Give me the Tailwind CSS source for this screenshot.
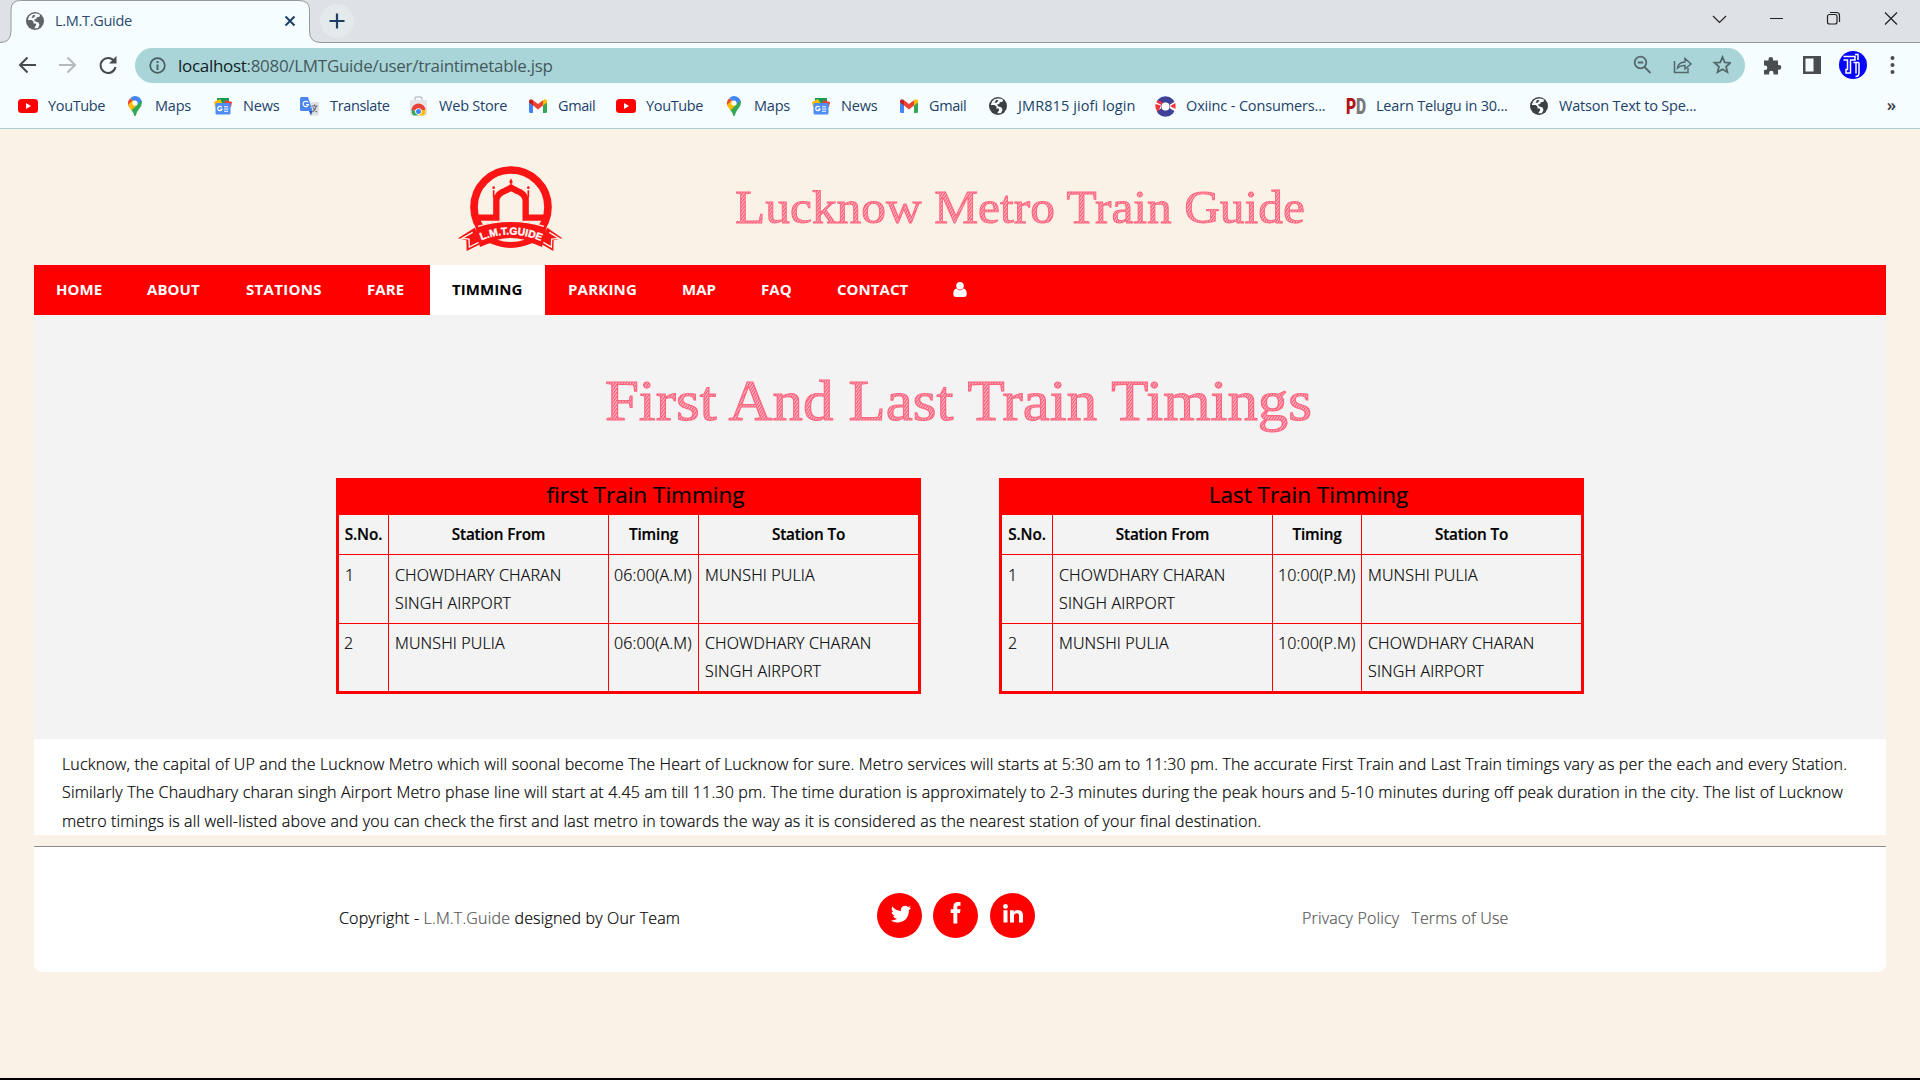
<!DOCTYPE html>
<html lang="en">
<head>
<meta charset="utf-8">
<title>L.M.T.Guide</title>
<script src="https://cdn.jsdelivr.net/npm/@tailwindcss/browser@4"></script>
</head>
<body class="w-[1920px] h-[1080px] overflow-hidden bg-[#fbf2e7] font-['Open_Sans',sans-serif] text-black flex flex-col">

<svg class="absolute w-0 h-0">
  <defs>
    <pattern id="hatch" width="2.3" height="2.3" patternUnits="userSpaceOnUse" patternTransform="rotate(35)"><rect width="2.3" height="2.3" fill="#ff6680" fill-opacity=".35"/><rect width="1.2" height="2.3" fill="#ff5474"/></pattern>
    <symbol id="yt" viewBox="0 0 20 20"><rect y="3" width="20" height="14" rx="3.5" fill="#f00"/><path d="M8 7l5 3-5 3z" fill="#fff"/></symbol>
    <symbol id="maps" viewBox="0 0 14 20"><path d="M7 0a7 7 0 0 1 6.9 6L7 10 2.5 2Q4.500 0 7 0z" fill="#4285f4"/><path d="M2.200 2.200L7 7 1.300 11Q-1.800 6 2.200 2.200z" fill="#ea4335"/><path d="M.3 8.500L5 4l4 5-5 6Q1 12 .3 8.500z" fill="#fbbc04"/><path d="M13.600 4.500Q15 9 11 13 8.500 16 7.800 19.500q-.8 1-1.600 0Q5.800 17 3.500 14.300z" fill="#34a853"/><circle cx="7" cy="7" r="2.600" fill="#fff"/></symbol>
    <symbol id="news" viewBox="0 0 18 18"><path d="M3 1h12v6H3z" fill="#0f9d58"/><path d="M0 5l6-3 3 5-8 3z" fill="#fbbc04"/><path d="M11 3l7 2-1 5-7-2z" fill="#ea4335"/><rect x="1.500" y="6" width="15" height="11.500" rx="1.500" fill="#4f8df5"/><path d="M7.700 10.200a2.200 2.200 0 1 0 .3 2H6.200" stroke="#fff" stroke-width="1.200" fill="none"/><path d="M10 9.800h4M10 12h4.500M10 14.200h4" stroke="#fff" stroke-width="1.100"/></symbol>
    <symbol id="gmail" viewBox="0 0 18 14"><path d="M0 2v10.500q0 1.500 1.300 1.500H4V5z" fill="#4285f4"/><path d="M18 2v10.500q0 1.500-1.300 1.500H14V5z" fill="#34a853"/><path d="M4 1.200l5 3.900 5-3.900v5.300l-5 4-5-4z" fill="#ea4335"/><path d="M0 2Q.8-.8 4 1.200v5.300L0 3.500z" fill="#c5221f"/><path d="M18 2q-.8-2.800-4-.8v5.300l4-3z" fill="#fbbc04"/></symbol>
    <symbol id="globe" viewBox="0 0 18 18"><circle cx="9" cy="9" r="9" fill="currentColor"/><path d="M9.500 1.500Q5.500 1 3 4.500L1.800 8h3.700l2 1.500v2h2.200l.5 1.500-2 3.300Q11 16.500 12 16l1.500-3-1-2.500-3.500-1.200-1-1.800 2.200-.6.6-1.600 2.700-.6.5-2Q12 1.500 9.500 1.500z" fill="#f5fdff"/><path d="M7 3l2.500.3L8 5.500 5.500 6z" fill="currentColor"/></symbol>
  </defs>
</svg>

<!-- Tab strip -->
<div class="h-[43px] shrink-0 bg-[#dee1e6] border-b border-[#96999e] flex items-start relative">
  <svg class="absolute left-0 top-0" width="325" height="43" viewBox="0 0 325 43"><path d="M0 42.500Q11 42.500 11 31V10Q11 .5 20.500 .5H299Q309.500 .5 309.500 10V31Q309.500 42.500 321 42.500V44H0z" fill="#f5fdff"/><path d="M0 42.500Q11 42.500 11 31V10Q11 .5 20.500 .5H299Q309.500 .5 309.500 10V31Q309.500 42.500 321 42.500" fill="none" stroke="#96999e"/></svg>
  <div class="relative flex items-center h-[41px] w-[310px] pl-[26px]">
    <svg class="w-[18px] h-[18px] text-[#5f6368]"><use href="#globe"/></svg>
    <span class="ml-[11px] text-[14.5px] tracking-[-0.3px] text-[#2c4a6b] whitespace-nowrap">L.M.T.Guide</span>
    <svg class="absolute left-[284px] top-[15px]" width="12" height="12" viewBox="0 0 12 12"><path d="M1.500 1.500l9 9M10.500 1.500l-9 9" stroke="#1f3f66" stroke-width="2"/></svg>
  </div>
  <div class="relative ml-[10px] mt-[4px] w-[34px] h-[34px] rounded-full bg-[#e4e9ec] flex items-center justify-center">
    <svg width="16" height="16" viewBox="0 0 16 16"><path d="M8 .5v15M.5 8h15" stroke="#1f3f66" stroke-width="2.200"/></svg>
  </div>
  <svg class="ml-auto mr-[15px] mt-[10px]" width="200" height="18" viewBox="0 0 200 18" fill="none" stroke="#222" stroke-width="1.200"><path d="M8 6l6.500 6.500L21 6M65 8.500h13M180 2.500l12 12M192 2.500l-12 12"/><rect x="122.500" y="4.500" width="9.500" height="9.500" rx="2"/><path d="M125 2.500h6.500q3 0 3 3v6.500"/></svg>
</div>

<!-- Toolbar -->
<div class="h-[43px] shrink-0 bg-[#f5fdff] flex items-center pl-[18px] pr-[13px] pt-px">
  <svg width="100" height="20" viewBox="0 0 100 20" fill="none" stroke="#474a4d" stroke-width="2"><path d="M18 10H3M9.500 2.500L2 10l7.500 7.500"/><path d="M41 10h15M49.500 2.500L57 10l-7.500 7.500" stroke="#b4b9bc"/><path d="M96.500 6.500A7.500 7.500 0 1 0 97.500 12" /><path d="M98.500 1v7.500H91z" fill="#474a4d" stroke="none"/></svg>
  <div class="ml-[17px] w-[1610px] h-[35px] rounded-full bg-[#a9d5d8] flex items-center pl-[14px] pr-[14px]">
    <svg width="17" height="17" viewBox="0 0 17 17"><circle cx="8.500" cy="8.500" r="7.300" fill="none" stroke="#4b5c5f" stroke-width="1.700"/><path d="M8.500 7.500V13M8.500 4v2" stroke="#4b5c5f" stroke-width="1.900"/></svg>
    <span class="ml-[12px] pt-px text-[17px] tracking-[-0.3px] text-[#44595c] whitespace-nowrap"><span class="text-[#101c1e]">localhost</span>:8080/LMTGuide/user/traintimetable.jsp</span>
    <svg class="ml-auto" width="98" height="20" viewBox="0 0 98 20" fill="none" stroke="#54686b" stroke-width="1.800"><circle cx="7.500" cy="7.500" r="5.800"/><path d="M11.500 12l6 6M4.800 7.500h5.400"/><path d="M41.500 6v11.500H55V13M44.500 13Q45 7.500 52 7V3.500l6 5.500-6 5V10.500Q47 10.500 44.500 13z" stroke-width="1.500"/><path d="M89.500 2l2.200 5.300 5.800.5-4.400 3.800 1.300 5.600L89.500 14.200l-4.900 3 1.300-5.600L81.500 7.800l5.800-.5z"/></svg>
  </div>
  <svg class="ml-[18px]" width="19" height="19" viewBox="0 0 19 19"><path d="M1 4.500h4.500V3.300a2.300 2.300 0 0 1 4.600 0v1.200H15v4.600h1a2.300 2.300 0 0 1 0 4.600h-1V18.500H10.500V17a2.200 2.200 0 0 0-4.400 0v1.500H1V14h1a2.300 2.300 0 0 0 0-4.600H1z" fill="#4a4d50"/></svg>
  <svg class="ml-[21px]" width="18" height="18" viewBox="0 0 18 18"><path d="M0 0h18v18H0zM2.500 2.500v13h8v-13z" fill="#4a4d50" fill-rule="evenodd"/></svg>
  <svg class="ml-[18px]" width="28" height="28" viewBox="0 0 28 28"><circle cx="14" cy="14" r="14" fill="#0505ff"/><path d="M4.500 5.500H16V9H11.500V22H7V18.500H8.500V9H4.500M16 3.500h3V9M14.500 11.500H17V22.500M20 11.500V22q0 3.500-3.500 3.500M17 11.500h3" fill="none" stroke="#fff" stroke-width="1.500"/></svg>
  <svg class="ml-[23px]" width="5" height="20" viewBox="0 0 5 20" fill="#4a4d50"><circle cx="2.500" cy="3" r="2"/><circle cx="2.500" cy="10" r="2"/><circle cx="2.500" cy="17" r="2"/></svg>
</div>

<!-- Bookmarks bar -->
<div class="h-[43px] shrink-0 bg-[#f5fdff] border-b border-[#a9d0d3] flex items-center pl-[18px] text-[14.5px] tracking-[-0.2px] text-[#1d3f69] whitespace-nowrap pb-[2px]">
  <div class="w-[110px] flex items-center"><svg class="w-[20px] h-[20px] mr-[10px]"><use href="#yt"/></svg><span class="tracking-[-0.35px]">YouTube</span></div>
  <div class="w-[86px] flex items-center"><svg class="w-[14px] h-[20px] mr-[13px]"><use href="#maps"/></svg><span>Maps</span></div>
  <div class="w-[86px] flex items-center"><svg class="w-[18px] h-[18px] mr-[11px]"><use href="#news"/></svg><span>News</span></div>
  <div class="w-[110px] flex items-center"><svg class="mr-[11px]" width="19" height="19" viewBox="0 0 19 19"><path d="M8 5h9.500q1.500 0 1.500 1.500V17q0 1.500-1.500 1.500H11z" fill="#dfe1e4"/><path d="M1.500 0H8l4.500 14H1.500Q0 14 0 12.500V1.500Q0 0 1.500 0z" fill="#4a86ee"/><path d="M9 14h3.500L11 18.500z" fill="#2b4fb8"/><path d="M8 5.300a2.700 2.700 0 1 0 .5 2.200H6" fill="none" stroke="#fff" stroke-width="1.200"/><path d="M11.500 9h6M14.500 7.500V9M16.500 9q-1 4-4 6M13 10.500q1.500 3 4 4.500" fill="none" stroke="#666b70" stroke-width="1.100"/></svg><span class="tracking-[-0.35px]">Translate</span></div>
  <div class="w-[119px] flex items-center"><svg class="mr-[12px]" width="17" height="20" viewBox="0 -2 17 20"><path d="M5 3V1q0-2 1.500-2h4q1.500 0 1.500 2v2" fill="none" stroke="#c0c4c8" stroke-width="1.500"/><path d="M0 2h17v14q0 1.500-1.500 1.500h-14Q0 17.500 0 16z" fill="#e3e5e8"/><path d="M1.500 12.500a7 7 0 0 1 14 0z" fill="#ea4335"/><path d="M1.500 11.500Q1 15 3.500 17.500H8l-2-4z" fill="#34a853"/><path d="M15.500 11.500Q16 15 14 17.500H8l3-5z" fill="#fbbc04"/><circle cx="8.500" cy="13.500" r="3.300" fill="#fff"/><circle cx="8.500" cy="13.500" r="2.500" fill="#4285f4"/></svg><span class="tracking-[-0.2px]">Web Store</span></div>
  <div class="w-[87px] flex items-center"><svg class="w-[18px] h-[14px] mr-[11px]"><use href="#gmail"/></svg><span class="tracking-[-0.4px]">Gmail</span></div>
  <div class="w-[111px] flex items-center"><svg class="w-[20px] h-[20px] mr-[10px]"><use href="#yt"/></svg><span class="tracking-[-0.35px]">YouTube</span></div>
  <div class="w-[85px] flex items-center"><svg class="w-[14px] h-[20px] mr-[13px]"><use href="#maps"/></svg><span>Maps</span></div>
  <div class="w-[88px] flex items-center"><svg class="w-[18px] h-[18px] mr-[11px]"><use href="#news"/></svg><span>News</span></div>
  <div class="w-[89px] flex items-center"><svg class="w-[18px] h-[14px] mr-[11px]"><use href="#gmail"/></svg><span class="tracking-[-0.4px]">Gmail</span></div>
  <div class="w-[166px] flex items-center"><svg class="w-[18px] h-[18px] mr-[11px] text-[#3c4043]"><use href="#globe"/></svg><span class="tracking-[0.1px]">JMR815 jiofi login</span></div>
  <div class="w-[190px] flex items-center"><svg class="mr-[10px]" width="21" height="21" viewBox="0 0 21 21"><circle cx="10.500" cy="10.500" r="7" fill="none" stroke="#3f4196" stroke-width="6.500"/><path d="M0 5l6 3.500v4L0 16zM21 5l-6 3.500v4l6 3.500z" fill="#fff"/><path d="M.5 8L6 9.500 3 16Q-.5 13 .5 8zM20.500 7L15 10 20.500 13zM3 4l5 3-1 2-5.500-2.500z" fill="#f5333f"/><circle cx="10.500" cy="10.500" r="4" fill="#fff"/></svg><span class="tracking-[-0.15px]">Oxiinc - Consumers...</span></div>
  <div class="w-[185px] flex items-center"><svg class="mr-[9px]" width="22" height="26" viewBox="0 0 22 26"><text x="1" y="21" font-family="Roboto, sans-serif" font-weight="900" font-size="22" fill="#b01414" textLength="20" lengthAdjust="spacingAndGlyphs">P<tspan fill="#77797b">D</tspan></text></svg><span class="tracking-[-0.2px]">Learn Telugu in 30...</span></div>
  <div class="flex items-center"><svg class="w-[18px] h-[18px] mr-[11px] text-[#3c4043]"><use href="#globe"/></svg><span class="tracking-[-0.2px]">Watson Text to Spe...</span></div>
  <span class="ml-auto mr-[24px] text-[17px] font-semibold text-[#3c4043] pb-[2px]">»</span>
</div>

<!-- Site header -->
<header class="h-[136px] shrink-0 flex items-start pl-[457px] pt-[37px]">
  <svg width="106" height="86" viewBox="51 45 318 258">
    <circle cx="213" cy="168" r="111" fill="none" stroke="#fb1414" stroke-width="23"/>
    <path d="M108 200H169V145Q174 126 196 119Q207 114 213 110Q219 114 230 119Q252 126 257 145V200H318" fill="none" stroke="#fb1414" stroke-width="19"/>
    <path d="M161 118V140M265 118V140" stroke="#fb1414" stroke-width="5"/>
    <path d="M213 82l5 10-2 6h-6l-2-6z" fill="#fb1414"/><circle cx="161" cy="110" r="4" fill="#fb1414"/><circle cx="265" cy="110" r="4" fill="#fb1414"/>
    <path d="M118 236Q213 200 308 236L290 270Q213 310 136 270z" fill="#fb1414"/>
    <path d="M104 230L54 262L79 268L80 300L128 276M322 230L367 262L341 268L340 300L298 276" fill="#fb1414"/>
    <path d="M98 244L66 262L87 264L88 288L116 274M328 244L357 262L335 264L334 288L310 274" fill="none" stroke="#fbf2e7" stroke-width="4"/>
    <path d="M106 228Q213 192 320 228L306 288Q213 244 120 288z" fill="#fb1414"/>
    <path d="M114 226Q213 196 312 226" fill="none" stroke="#fbf2e7" stroke-width="4"/>
    <path d="M172 266Q213 256 254 266Q213 280 172 266z" fill="#fbf2e7"/>
    <path id="arc" d="M124 268Q213 232 302 270" fill="none"/>
    <text font-family="Liberation Sans, sans-serif" font-weight="700" font-size="31" fill="#fff" stroke="#fff"><textPath href="#arc" textLength="184">L.M.T.GUIDE</textPath></text>
  </svg>
  <svg class="ml-[167px]" width="590" height="84" viewBox="0 0 590 84"><text x="5" y="57" textLength="570" lengthAdjust="spacingAndGlyphs" font-family="Liberation Serif, serif" font-size="47" fill="url(#hatch)" stroke="#ff6680" stroke-width=".9">Lucknow Metro Train Guide</text></svg>
</header>

<!-- Navigation -->
<nav class="mx-[34px] h-[50px] shrink-0 bg-[#f00] flex items-center text-white text-[15px] font-bold tracking-[0.05px] *:pb-px">
  <a class="w-[91px] pl-[22px]">HOME</a>
  <a class="w-[99px] pl-[22px]">ABOUT</a>
  <a class="w-[121px] pl-[22px] tracking-[0.3px]">STATIONS</a>
  <a class="w-[85px] pl-[22px]">FARE</a>
  <a class="w-[115px] pl-[22px] h-full flex items-center bg-white text-black">TIMMING</a>
  <a class="w-[114px] pl-[23px] tracking-[0.2px]">PARKING</a>
  <a class="w-[80px] pl-[23px]">MAP</a>
  <a class="w-[76px] pl-[22px]">FAQ</a>
  <a class="w-[117px] pl-[22px]">CONTACT</a>
  <svg class="ml-[21px]" width="14" height="18" viewBox="0 0 14 16" fill="#fff"><circle cx="7" cy="4.300" r="3.800"/><path d="M3.300 7Q7 10.500 10.700 7Q14 8 13.700 13Q13.500 15.500 11 15.500H3Q.5 15.500 .3 13Q0 8 3.300 7z"/></svg>
</nav>

<!-- Timetables -->
<main class="mx-[34px] h-[424px] shrink-0 bg-[#f3f3f3] flex flex-col">
  <svg class="ml-[560px] mt-[45px] shrink-0" width="740" height="90" viewBox="0 0 740 90"><text x="11" y="60" textLength="707" lengthAdjust="spacingAndGlyphs" font-family="Liberation Serif, serif" font-size="57" fill="url(#hatch)" stroke="#ff6680" stroke-width="1.1">First And Last Train Timings</text></svg>
  <div class="flex gap-[78px] pl-[302px] mt-[28px] text-[16px] leading-[28px] font-light tracking-[0.15px] [-webkit-text-stroke:0.2px]">
    <section class="w-[585px] h-[216px] border-3 border-[#f00] bg-[#f00]">
      <h2 class="h-[34px] pl-[34px] text-center text-[22.5px] leading-[28px] font-normal tracking-[0px]">first Train Timming</h2>
      <div class="grid grid-cols-[49px_219px_89px_219px] grid-rows-[39px_68px_67px] gap-px *:bg-[#f3f3f3]">
        <div class="text-center text-[15.3px] font-semibold tracking-[-0.15px] pt-[5px]">S.No.</div><div class="text-center text-[15.3px] font-semibold tracking-[-0.15px] pt-[5px]">Station From</div><div class="text-center text-[15.3px] font-semibold tracking-[-0.15px] pt-[5px]">Timing</div><div class="text-center text-[15.3px] font-semibold tracking-[-0.15px] pt-[5px]">Station To</div>
        <div class="pl-[6px] pt-[6px]">1</div><div class="pl-[6px] pt-[6px]">CHOWDHARY CHARAN<br>SINGH AIRPORT</div><div class="pl-[5px] pt-[6px]">06:00(A.M)</div><div class="pl-[6px] pt-[6px]">MUNSHI PULIA</div>
        <div class="pl-[5px] pt-[5px]">2</div><div class="pl-[6px] pt-[5px]">MUNSHI PULIA</div><div class="pl-[5px] pt-[5px]">06:00(A.M)</div><div class="pl-[6px] pt-[5px]">CHOWDHARY CHARAN<br>SINGH AIRPORT</div>
      </div>
    </section>
    <section class="w-[585px] h-[216px] border-3 border-[#f00] bg-[#f00]">
      <h2 class="h-[34px] pl-[34px] text-center text-[22.5px] leading-[28px] font-normal tracking-[0px]">Last Train Timming</h2>
      <div class="grid grid-cols-[50px_219px_88px_219px] grid-rows-[39px_68px_67px] gap-px *:bg-[#f3f3f3]">
        <div class="text-center text-[15.3px] font-semibold tracking-[-0.15px] pt-[5px]">S.No.</div><div class="text-center text-[15.3px] font-semibold tracking-[-0.15px] pt-[5px]">Station From</div><div class="text-center text-[15.3px] font-semibold tracking-[-0.15px] pt-[5px]">Timing</div><div class="text-center text-[15.3px] font-semibold tracking-[-0.15px] pt-[5px]">Station To</div>
        <div class="pl-[6px] pt-[6px]">1</div><div class="pl-[6px] pt-[6px]">CHOWDHARY CHARAN<br>SINGH AIRPORT</div><div class="pl-[5px] pt-[6px]">10:00(P.M)</div><div class="pl-[6px] pt-[6px]">MUNSHI PULIA</div>
        <div class="pl-[6px] pt-[5px]">2</div><div class="pl-[6px] pt-[5px]">MUNSHI PULIA</div><div class="pl-[5px] pt-[5px]">10:00(P.M)</div><div class="pl-[6px] pt-[5px]">CHOWDHARY CHARAN<br>SINGH AIRPORT</div>
      </div>
    </section>
  </div>
</main>

<section class="mx-[34px] h-[96px] shrink-0 bg-white pl-[28px] pt-[11px] text-[16px] leading-[28.400px] font-light tracking-[0.162px] [-webkit-text-stroke:0.2px] whitespace-nowrap">
  <p>Lucknow, the capital of UP and the Lucknow Metro which will soonal become The Heart of Lucknow for sure. Metro services will starts at 5:30 am to 11:30 pm. The accurate First Train and Last Train timings vary as per the each and every Station.</p>
  <p>Similarly The Chaudhary charan singh Airport Metro phase line will start at 4.45 am till 11.30 pm. The time duration is approximately to 2-3 minutes during the peak hours and 5-10 minutes during off peak duration in the city. The list of Lucknow</p>
  <p>metro timings is all well-listed above and you can check the first and last metro in towards the way as it is considered as the nearest station of your final destination.</p>
</section>

<footer class="mx-[34px] mt-[11px] h-[126px] shrink-0 bg-white border-t border-[#8c8c8c] rounded-b-lg flex items-start pl-[305px] text-[16px] leading-[28px] font-light tracking-[0.162px] [-webkit-text-stroke:0.2px] whitespace-nowrap">
  <p class="mt-[57px] w-[538px]">Copyright - <span class="text-[#555]">L.M.T.Guide</span> designed by Our Team</p>
  <div class="flex gap-[11px] mt-[46px]">
    <a class="w-[45px] h-[45px] rounded-full bg-[#f00] flex items-center justify-center pb-[4px]"><svg class="ml-[2px]" width="22" height="18" viewBox="0 0 22 18"><path d="M21 2.500q-1 .5-2 .6 1.200-.8 1.600-2-1.200.7-2.500 1A4.200 4.200 0 0 0 11 6Q5.500 5.800 2.200 1.600Q.6 5 3.500 7.200 2.500 7.100 1.600 6.700q.2 3.100 3.400 4.100-.9.200-1.900.1.900 2.600 3.900 2.900-2.600 2-6.200 1.800Q4 17.500 7.300 17.500 18.500 17 19 5q1.200-1 2-2.500z" fill="#fff"/></svg></a>
    <a class="w-[45px] h-[45px] rounded-full bg-[#f00] flex items-center justify-center pb-[5px]"><svg width="12" height="22" viewBox="0 0 12 22"><path d="M10.500 0v3.700H8.600Q7.300 3.700 7.300 5V7.300h3.200L10 11H7.300v10.500H3.400V11H.7V7.300h2.700V4.500Q3.400 0 7.800 0z" fill="#fff"/></svg></a>
    <a class="ml-px w-[45px] h-[45px] rounded-full bg-[#f00] flex items-center justify-center pb-[4px]"><svg class="ml-[2px]" width="21" height="19" viewBox="0 0 21 19" fill="#fff"><circle cx="2.500" cy="2.400" r="2.400"/><path d="M.5 6.200h4V18.500h-4zM7 6.200h3.800V8Q12 5.800 15 5.900q5 .1 5 5.800v6.800h-4V12q0-2.700-2.400-2.700T11 12v6.500H7z"/></svg></a>
  </div>
  <p class="mt-[57px] ml-[267px] text-[#555] flex gap-[12px]"><a>Privacy Policy</a><a>Terms of Use</a></p>
</footer>

<div class="mt-auto h-[2px] shrink-0 bg-black"></div>
</body>
</html>
